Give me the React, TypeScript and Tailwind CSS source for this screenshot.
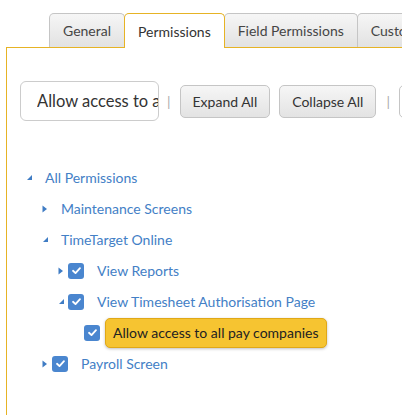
import type { ReactNode } from 'react';

interface TreeNode {
  label: string;
  checked?: boolean;
  expanded?: boolean;
  leaf?: boolean;
  highlight?: boolean;
  children?: TreeNode[];
}

const tree: TreeNode[] = [
  {
    label: 'All Permissions',
    expanded: true,
    children: [
      { label: 'Maintenance Screens' },
      {
        label: 'TimeTarget Online',
        expanded: true,
        children: [
          { label: 'View Reports', checked: true },
          {
            label: 'View Timesheet Authorisation Page',
            checked: true,
            expanded: true,
            children: [{ label: 'Allow access to all pay companies', checked: true, leaf: true, highlight: true }],
          },
        ],
      },
      { label: 'Payroll Screen', checked: true },
    ],
  },
];

const tabs = ['General', 'Permissions', 'Field Permissions', 'Custom Fields'];

function Toggle({ node }: { node: TreeNode }) {
  if (node.leaf) return <span className="w-[11px] shrink-0" />;
  return (
    <span className="w-[11px] shrink-0 flex items-center">
      {node.expanded ? (
        <svg width="7" height="7" viewBox="0 0 7 7" className="ml-px">
          <path d="M6 1 L6 6 L1 6 Z" fill="#3f7cc4" />
        </svg>
      ) : (
        <svg width="6" height="8" viewBox="0 0 6 8" className="ml-px">
          <path d="M0.5 0.5 L5 4 L0.5 7.5 Z" fill="#3f7cc4" />
        </svg>
      )}
    </span>
  );
}

function Checkbox() {
  return (
    <span className="w-4 h-4 shrink-0 mr-[5px] rounded-[3px] bg-[#4a86cf] flex items-center justify-center">
      <svg width="11" height="11" viewBox="0 0 12 12" fill="none">
        <path d="M2.2 6.3 L4.9 8.8 L9.8 3.4" stroke="white" strokeWidth="2" strokeLinecap="round" strokeLinejoin="round" />
      </svg>
    </span>
  );
}

function Node({ node }: { node: TreeNode }): ReactNode {
  return (
    <li>
      <div className="flex items-center h-[31px]">
        <Toggle node={node} />
        {node.checked && <Checkbox />}
        {node.highlight ? (
          <span className="h-[30px] flex items-center px-[7px] rounded-[5px] border border-[#e0a817] bg-[#f6c431] text-[#222] shadow-[0_1px_3px_rgba(0,0,0,0.25)] whitespace-nowrap">
            {node.label}
          </span>
        ) : (
          <span className={`${node.checked ? 'px-2' : 'pl-[9px] pr-2'} text-[#4380c6] whitespace-nowrap`}>{node.label}</span>
        )}
      </div>
      {node.expanded && node.children && (
        <ul className="pl-4">
          {node.children.map((c) => (
            <Node key={c.label} node={c} />
          ))}
        </ul>
      )}
    </li>
  );
}

export default function App() {
  return (
    <div className="w-[402px] h-[415px] overflow-hidden bg-white flex flex-col text-[14px] font-['Lato','Liberation_Sans',sans-serif]">
      <div className="flex items-end pt-[13px] pl-[49px] shrink-0 relative z-10">
        {tabs.map((t, i) => {
          const active = i === 1;
          return (
            <div
              key={t}
              className={
                active
                  ? 'shrink-0 h-[35px] -mb-px -ml-px relative px-[13px] flex items-center rounded-t-[5px] border border-b-0 border-[#e6b325] bg-white text-[#333] whitespace-nowrap'
                  : `shrink-0 h-[34px] ${i > 0 ? '-ml-px' : ''} px-[13px] flex items-center rounded-t-[5px] border border-b-0 border-[#c5c5c5] bg-gradient-to-b from-[#f6f6f6] to-[#e2e2e2] text-[#454545] whitespace-nowrap`
              }
            >
              {t}
            </div>
          );
        })}
      </div>
      <div className="flex-1 ml-[6px] w-[520px] border-l border-t border-[#e6b325] pl-[13px] pt-[33px]">
        <div className="flex items-center h-[40px]">
          <input
            readOnly
            value="Allow access to all pay companies"
            className="w-[139px] h-[40px] rounded-[6px] border border-[#cccccc] pl-4 pr-0 text-[16.5px] text-[#333] outline-none bg-white"
          />
          <span className="ml-[8px] mr-[9px] text-[#aaa]">|</span>
          <button className="h-[33px] px-[12px] rounded-[5px] border border-[#c5c5c5] bg-gradient-to-b from-[#f6f6f6] to-[#e3e3e3] text-[#333]">
            Expand All
          </button>
          <button className="ml-[9px] h-[33px] px-[12px] rounded-[5px] border border-[#c5c5c5] bg-gradient-to-b from-[#f6f6f6] to-[#e3e3e3] text-[#333]">
            Collapse All
          </button>
          <span className="ml-[10px] mr-[9px] text-[#aaa]">|</span>
          <button className="h-[33px] px-[12px] rounded-[5px] border border-[#c5c5c5] bg-white text-[#333] whitespace-nowrap">
            Show Selected
          </button>
        </div>
        <ul className="mt-[41px] pl-[5px]">
          {tree.map((n) => (
            <Node key={n.label} node={n} />
          ))}
        </ul>
      </div>
    </div>
  );
}
